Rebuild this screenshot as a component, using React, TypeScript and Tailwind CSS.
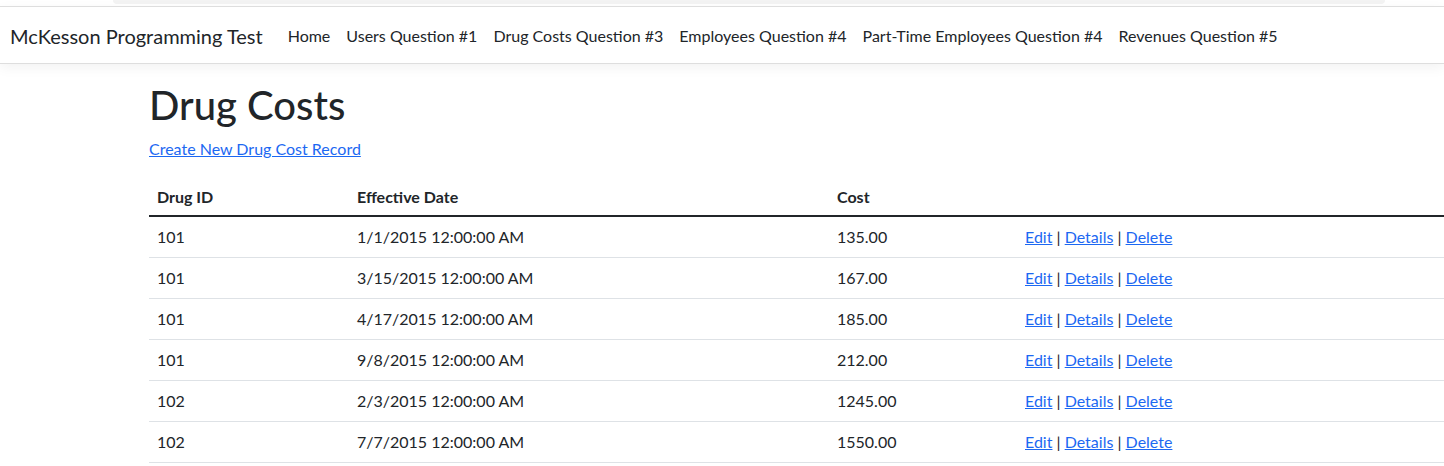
import React from 'react';

const navLinks = [
  'Home',
  'Users Question #1',
  'Drug Costs Question #3',
  'Employees Question #4',
  'Part-Time Employees Question #4',
  'Revenues Question #5',
];

const rows = [
  { id: '101', date: '1/1/2015 12:00:00 AM', cost: '135.00' },
  { id: '101', date: '3/15/2015 12:00:00 AM', cost: '167.00' },
  { id: '101', date: '4/17/2015 12:00:00 AM', cost: '185.00' },
  { id: '101', date: '9/8/2015 12:00:00 AM', cost: '212.00' },
  { id: '102', date: '2/3/2015 12:00:00 AM', cost: '1245.00' },
  { id: '102', date: '7/7/2015 12:00:00 AM', cost: '1550.00' },
];

const App: React.FC = () => {
  return (
    <div className="min-h-screen bg-white text-[#212529] text-[16px] leading-[1.5] font-['Lato',sans-serif]">
      {/* Strip above the navbar */}
      <div className="h-[6px] pl-[113px] pr-[59px]">
        <div className="h-[4px] bg-[#f3f3f3] rounded-b-[6px]" />
      </div>

      {/* Navbar */}
      <header className="relative bg-white border-y border-[#dedede] shadow-[0_4px_12px_rgba(0,0,0,0.05)]">
        <nav className="flex items-center h-[56px] pt-[2px] px-[10px]">
          <a className="text-[20px] leading-[30px] mr-[17px] text-[#212529]">McKesson Programming Test</a>
          <ul className="flex items-center">
            {navLinks.map((l) => (
              <li key={l}>
                <a className="block px-[8px] leading-[24px] text-[#212529]">{l}</a>
              </li>
            ))}
          </ul>
        </nav>
      </header>

      {/* Main content */}
      <main className="pl-[149px] pt-[17px]">
        <h1 className="text-[40px] font-medium leading-[1.2] mb-[8px] mt-0">Drug Costs</h1>
        <p className="mb-[14px]">
          <a className="text-[#1c68f2] underline cursor-pointer">Create New Drug Cost Record</a>
        </p>
        <table className="w-full border-collapse text-left">
          <thead>
            <tr className="border-b-2 border-[#212529]">
              <th className="w-[200px] px-[8px] pt-[10px] pb-[6px] font-bold align-bottom">Drug ID</th>
              <th className="w-[480px] px-[8px] pt-[10px] pb-[6px] font-bold align-bottom">Effective Date</th>
              <th className="w-[188px] px-[8px] pt-[10px] pb-[6px] font-bold align-bottom">Cost</th>
              <th className="px-[8px] pt-[10px] pb-[6px]"></th>
            </tr>
          </thead>
          <tbody>
            {rows.map((r, i) => (
              <tr key={i} className="border-b border-[#dee2e6]">
                <td className="p-[8px]">{r.id}</td>
                <td className="p-[8px]">{r.date}</td>
                <td className="p-[8px]">{r.cost}</td>
                <td className="p-[8px]">
                  <a className="text-[#1c68f2] underline cursor-pointer">Edit</a> |{' '}
                  <a className="text-[#1c68f2] underline cursor-pointer">Details</a> |{' '}
                  <a className="text-[#1c68f2] underline cursor-pointer">Delete</a>
                </td>
              </tr>
            ))}
          </tbody>
        </table>
      </main>
    </div>
  );
};

export default App;
